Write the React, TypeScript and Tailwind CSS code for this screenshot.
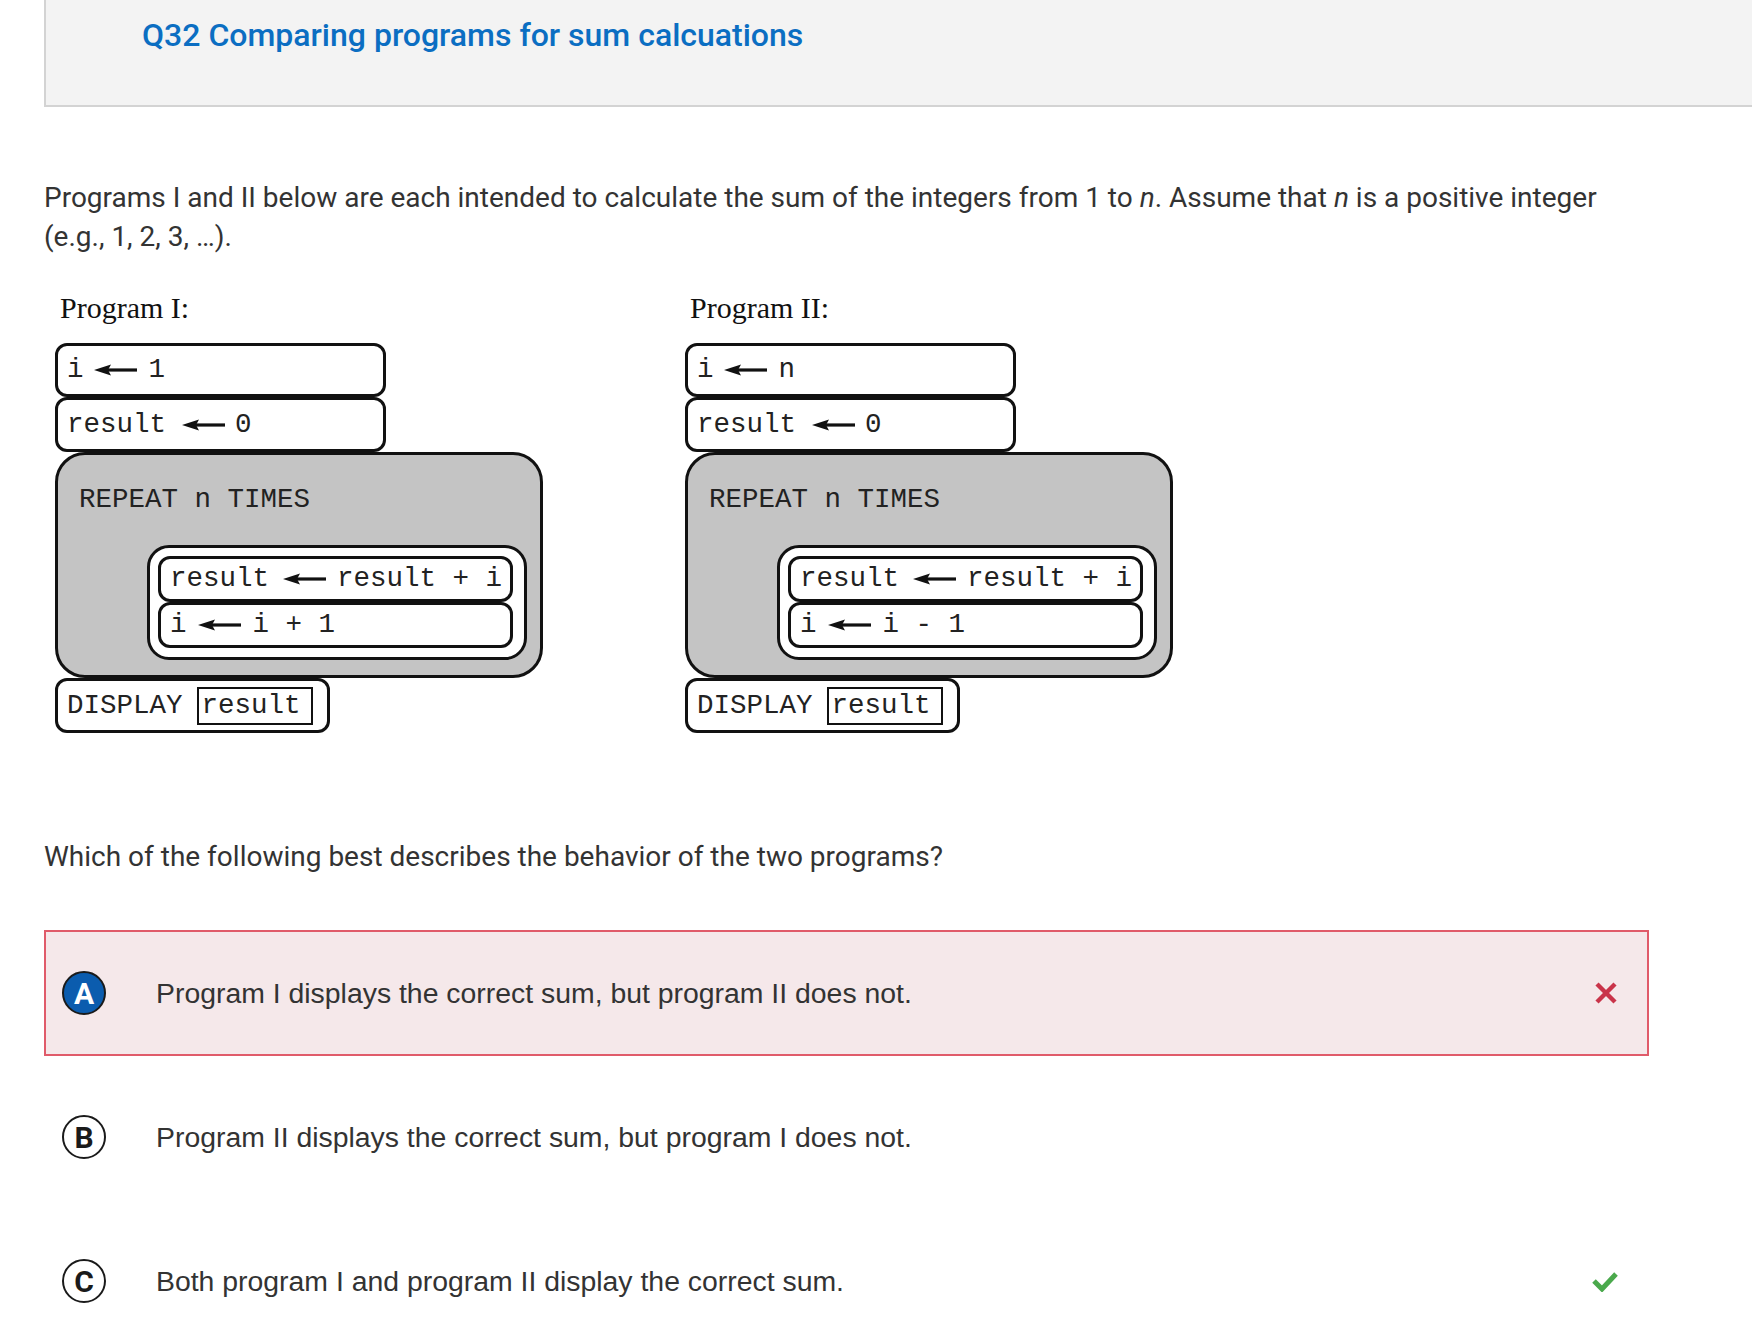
import React from "react";

const Arrow = ({ ml = 12, mr = 11 }: { ml?: number; mr?: number }) => (
  <svg
    width="43"
    height="12"
    viewBox="0 0 43 12"
    style={{ marginLeft: ml, marginRight: mr }}
    className="inline-block shrink-0"
  >
    <line x1="12" y1="6" x2="43" y2="6" stroke="#111" strokeWidth="3.2" />
    <polygon points="0,6 17,0.5 14,6 17,11.5" fill="#111" />
  </svg>
);

const mono = { fontFamily: '"Liberation Mono", "Courier New", monospace' };

const Program = ({ label, init, step }: { label: string; init: string; step: string }) => (
  <div className="w-[630px] shrink-0">
    <div
      className="pl-[5px] text-[30px] leading-[34px] text-[#111]"
      style={{ fontFamily: '"Liberation Serif", "Times New Roman", serif' }}
    >
      {label}
    </div>
    <div className="mt-[18px] text-[27.5px] text-[#222] whitespace-pre" style={mono}>
      <div className="w-[331px] h-[54px] border-[3px] border-[#111] rounded-[12px] bg-white flex items-center pl-[9px]">
        <span>i</span>
        <Arrow ml={10} mr={12} />
        <span>{init}</span>
      </div>
      <div className="w-[331px] h-[55px] border-[3px] border-[#111] rounded-[12px] bg-white flex items-center pl-[9px]">
        <span>result</span>
        <Arrow ml={16} mr={10} />
        <span>0</span>
      </div>
      <div className="w-[488px] h-[226px] border-[3px] border-[#111] rounded-[30px] bg-[#c4c4c4]">
        <div className="pt-[30px] pl-[21px] leading-[30px]">REPEAT n TIMES</div>
        <div className="mt-[30px] ml-[89px] w-[380px] h-[115px] border-[3px] border-[#111] rounded-[22px] bg-white pt-[8px] pl-[8px] pr-[11px]">
          <div className="h-[46px] border-[3px] border-[#111] rounded-[12px] flex items-center pl-[9px]">
            <span>result</span>
            <Arrow ml={14} mr={11} />
            <span>result + i</span>
          </div>
          <div className="h-[46px] border-[3px] border-[#111] rounded-[12px] flex items-center pl-[9px]">
            <span>i</span>
            <Arrow ml={11} mr={12} />
            <span>{step}</span>
          </div>
        </div>
      </div>
      <div className="w-[275px] h-[55px] border-[3px] border-[#111] rounded-[12px] bg-white flex items-center pl-[9px]">
        <span>DISPLAY</span>
        <span className="ml-[14px] w-[116px] h-[38px] border-2 border-[#111] flex items-center pl-[3px]">result</span>
      </div>
    </div>
  </div>
);

const Circle = ({ letter, active }: { letter: string; active?: boolean }) => (
  <div
    className={
      active
        ? "w-[44px] h-[44px] rounded-full border-2 border-[#1a1a1a] bg-[#0b5cae] text-white flex items-center justify-center text-[30px] font-bold shrink-0"
        : "w-[44px] h-[44px] rounded-full border-2 border-[#1a1a1a] bg-white text-[#1a1a1a] flex items-center justify-center text-[30px] font-bold shrink-0"
    }
    style={{ fontFamily: 'Roboto, "Liberation Sans", Arial, sans-serif' }}
  >
    {letter}
  </div>
);

const XIcon = () => (
  <svg width="24" height="24" viewBox="0 0 24 24">
    <line x1="3" y1="3" x2="21" y2="21" stroke="#c9344a" strokeWidth="4.5" />
    <line x1="21" y1="3" x2="3" y2="21" stroke="#c9344a" strokeWidth="4.5" />
  </svg>
);

const CheckIcon = () => (
  <svg width="26" height="22" viewBox="0 0 26 22">
    <polyline points="2,11 10,19 24,4" fill="none" stroke="#4aa94c" strokeWidth="5" />
  </svg>
);

export default function App() {
  const sans = { fontFamily: '"Liberation Sans", Arial, sans-serif' };
  return (
    <div
      className="w-[1752px] h-[1338px] bg-white overflow-hidden"
      style={{ fontFamily: 'Roboto, "Noto Sans", sans-serif' }}
    >
      <div className="ml-[44px] h-[107px] bg-[#f3f3f3] border-l-2 border-b-2 border-[#d3d3d3]">
        <h1 className="pl-[96px] pt-[14px] text-[32px] leading-[42px] font-medium text-[#0b6ec2]">
          Q32 Comparing programs for sum calcuations
        </h1>
      </div>
      <div className="ml-[44px] w-[1605px]">
        <p className="mt-[71px] text-[28px] leading-[39px] text-[#333]">
          Programs I and II below are each intended to calculate the sum of the integers from 1 to <i>n</i>. Assume
          that <i>n</i> is a positive integer
          <br />
          (e.g., 1, 2, 3, …).
        </p>
        <div className="mt-[35px] pl-[11px] flex">
          <Program label="Program I:" init="1" step="i + 1" />
          <Program label="Program II:" init="n" step="i - 1" />
        </div>
        <p className="mt-[104px] text-[28px] leading-[39px] text-[#333]">
          Which of the following best describes the behavior of the two programs?
        </p>
        <div className="mt-[54px] flex flex-col gap-[18px]" style={sans}>
          <div className="h-[126px] border-2 border-[#e05b6a] bg-[#f5e8ea] flex items-center pl-[16px] pr-[29px]">
            <Circle letter="A" active />
            <span className="ml-[50px] flex-1 text-[28.4px] text-[#333]">
              Program I displays the correct sum, but program II does not.
            </span>
            <XIcon />
          </div>
          <div className="h-[126px] border-2 border-transparent flex items-center pl-[16px] pr-[29px]">
            <Circle letter="B" />
            <span className="ml-[50px] flex-1 text-[28.4px] text-[#333]">
              Program II displays the correct sum, but program I does not.
            </span>
          </div>
          <div className="h-[126px] border-2 border-transparent flex items-center pl-[16px] pr-[29px]">
            <Circle letter="C" />
            <span className="ml-[50px] flex-1 text-[28.4px] text-[#333]">
              Both program I and program II display the correct sum.
            </span>
            <CheckIcon />
          </div>
        </div>
      </div>
    </div>
  );
}
